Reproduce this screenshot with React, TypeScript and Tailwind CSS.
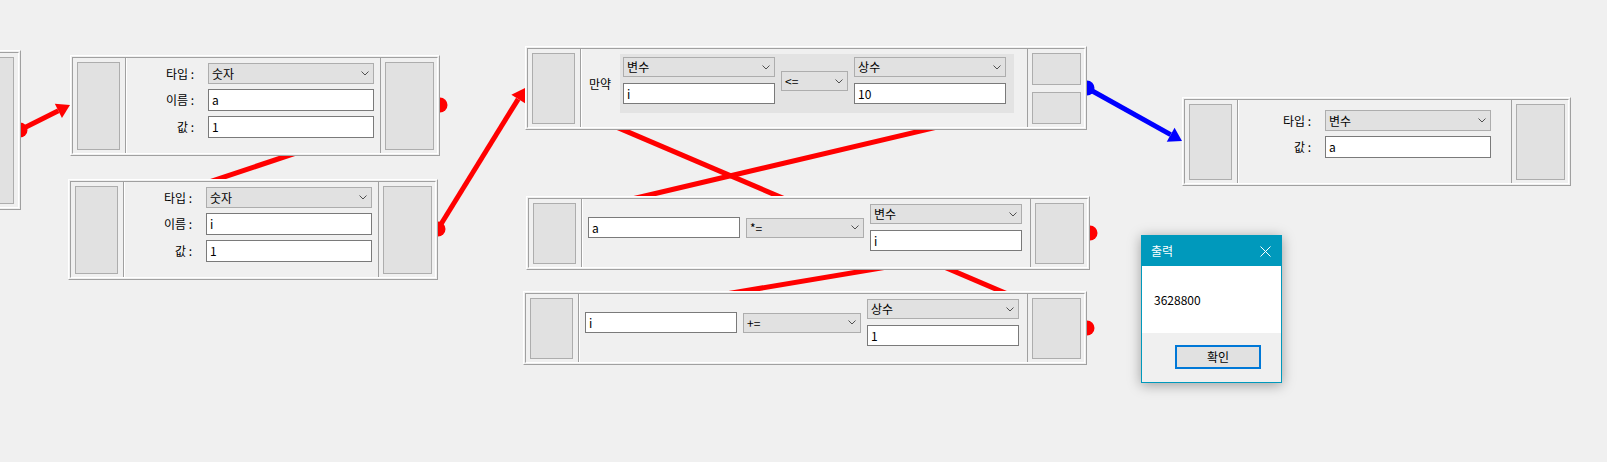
import type { ReactNode } from "react"

const RED = "#ff0000"
const BLUE = "#0000ff"

type Link = { from: [number, number]; to: [number, number]; color: string; dot?: boolean }

// wires between node ports, canvas coordinates
const links: Link[] = [
  { from: [20, 130], to: [70, 105], color: RED, dot: true },
  { from: [440, 105], to: [68, 229], color: RED, dot: true },
  { from: [438, 229], to: [525, 88], color: RED, dot: true },
  { from: [1086, 92], to: [526, 224], color: RED },
  { from: [1090, 233], to: [523, 328], color: RED, dot: true },
  { from: [1087, 328], to: [525, 88], color: RED, dot: true },
  { from: [1087, 88], to: [1182, 141], color: BLUE, dot: true },
]

function Wire({ from, to, color, dot }: Link) {
  const [x1, y1] = from
  const [x2, y2] = to
  const len = Math.hypot(x2 - x1, y2 - y1)
  const ux = (x2 - x1) / len
  const uy = (y2 - y1) / len
  const bx = x2 - ux * 13
  const by = y2 - uy * 13
  return (
    <g>
      {dot && <circle cx={x1} cy={y1} r={7.5} fill={color} />}
      <line x1={x1} y1={y1} x2={bx} y2={by} stroke={color} strokeWidth={5} />
      <polygon
        points={`${x2},${y2} ${bx - uy * 8},${by + ux * 8} ${bx + uy * 8},${by - ux * 8}`}
        fill={color}
      />
    </g>
  )
}

function Frame({ className, children }: { className: string; children?: ReactNode }) {
  return (
    <div
      className={`absolute border border-t-white border-l-white border-r-[#a0a0a0] border-b-[#a0a0a0] bg-[#f0f0f0] p-px ${className}`}
    >
      <div className="flex h-full border border-t-[#a0a0a0] border-l-[#a0a0a0] border-r-white border-b-white">
        {children}
      </div>
    </div>
  )
}

function Slot({ className = "" }: { className?: string }) {
  return <div className={`flex-1 border border-[#adadad] bg-[#e1e1e1] ${className}`} />
}

function InPort() {
  return (
    <div className="flex w-[53px] shrink-0 border-r border-[#a0a0a0] pt-[4px] pr-[5px] pb-[3px] pl-[4px]">
      <Slot />
    </div>
  )
}

function OutPort({ split }: { split?: boolean }) {
  return (
    <div className="flex w-[57px] shrink-0 flex-col gap-[7px] border-l border-[#a0a0a0] pt-[4px] pr-[3px] pb-[3px] pl-[4px]">
      <Slot />
      {split && <Slot />}
    </div>
  )
}

function Chevron() {
  return (
    <svg width="8" height="5" viewBox="0 0 8 5" className="shrink-0">
      <path d="M0.5 0.5 L4 4 L7.5 0.5" fill="none" stroke="#505050" strokeWidth="1" />
    </svg>
  )
}

function Combo({ text, className }: { text: string; className: string }) {
  return (
    <div
      className={`flex shrink-0 items-center justify-between border border-[#adadad] bg-[#e1e1e1] pl-[3px] pr-[4px] text-[12px] leading-none ${className}`}
    >
      <span>{text}</span>
      <Chevron />
    </div>
  )
}

function Field({ text, className }: { text: string; className: string }) {
  return (
    <div
      className={`flex shrink-0 items-center border border-[#7a7a7a] bg-white pl-[3px] text-[12px] leading-none ${className}`}
    >
      {text}
    </div>
  )
}

function Label({ text }: { text: string }) {
  return <div className="flex items-center justify-end text-[12px] leading-none">{text}</div>
}

function VarNode({ pos, type, name, value }: { pos: string; type: string; name: string; value: string }) {
  return (
    <Frame className={`h-[101px] w-[370px] ${pos}`}>
      <InPort />
      <div className="flex-1 border-l border-white pt-[5px]">
        <div className="grid grid-cols-[67px_166px] gap-x-[14px] gap-y-[5px]">
          <Label text="타입 :" />
          <Combo text={type} className="h-[21px] w-[166px]" />
          <Label text="이름 :" />
          <Field text={name} className="h-[22px] w-[166px]" />
          <Label text="값 :" />
          <Field text={value} className="h-[22px] w-[166px]" />
        </div>
      </div>
      <OutPort />
    </Frame>
  )
}

function AssignNode({ pos, target, op, kind, value }: { pos: string; target: string; op: string; kind: string; value: string }) {
  return (
    <Frame className={`h-[74px] w-[564px] ${pos}`}>
      <InPort />
      <div className="flex flex-1 items-start border-l border-white pt-[5px] pl-[5px]">
        <div className="flex items-center gap-[6px]">
          <Field text={target} className="h-[21px] w-[152px]" />
          <Combo text={op} className="h-[20px] w-[118px]" />
          <div className="flex flex-col gap-[6px]">
            <Combo text={kind} className="h-[20px] w-[152px]" />
            <Field text={value} className="h-[21px] w-[152px]" />
          </div>
        </div>
      </div>
      <OutPort />
    </Frame>
  )
}

export default function App() {
  return (
    <div className="relative h-[462px] w-[1607px] overflow-hidden bg-[#f0f0f0] font-['Noto_Sans_CJK_KR',sans-serif] text-black">
      <svg className="absolute inset-0" width={1607} height={462}>
        {links.map((l, i) => (
          <Wire key={i} {...l} />
        ))}
      </svg>

      {/* start node, cut off at the left edge */}
      <Frame className="left-[-40px] top-[50px] h-[160px] w-[61px]">
        <div className="flex flex-1 pt-[4px] pr-[4px] pb-[3px]">
          <Slot />
        </div>
      </Frame>

      <VarNode pos="left-[70px] top-[55px]" type="숫자" name="a" value="1" />
      <VarNode pos="left-[68px] top-[179px]" type="숫자" name="i" value="1" />

      {/* if node */}
      <Frame className="left-[525px] top-[46px] h-[84px] w-[562px]">
        <InPort />
        <div className="flex flex-1 items-start border-l border-white pt-[5px] pl-[7px]">
          <div className="flex items-center gap-[9px]">
            <span className="text-[12px] leading-none">만약</span>
            <div className="flex h-[59px] w-[394px] items-center gap-[6px] bg-[#e3e3e3] p-[3px] pr-[8px]">
              <div className="flex flex-col gap-[6px] self-start">
                <Combo text="변수" className="h-[20px] w-[152px]" />
                <Field text="i" className="h-[21px] w-[152px]" />
              </div>
              <Combo text="<=" className="h-[20px] w-[67px] self-start mt-[14px]" />
              <div className="flex flex-col gap-[6px] self-start">
                <Combo text="상수" className="h-[20px] w-[152px]" />
                <Field text="10" className="h-[21px] w-[152px]" />
              </div>
            </div>
          </div>
        </div>
        <OutPort split />
      </Frame>

      <AssignNode pos="left-[526px] top-[196px]" target="a" op="*=" kind="변수" value="i" />
      <AssignNode pos="left-[523px] top-[291px]" target="i" op="+=" kind="상수" value="1" />

      {/* print node */}
      <Frame className="left-[1182px] top-[97px] h-[89px] w-[389px]">
        <InPort />
        <div className="flex-1 border-l border-white pt-[10px]">
          <div className="grid grid-cols-[72px_166px] gap-x-[14px] gap-y-[5px]">
            <Label text="타입 :" />
            <Combo text="변수" className="h-[21px] w-[166px]" />
            <Label text="값 :" />
            <Field text="a" className="h-[22px] w-[166px]" />
          </div>
        </div>
        <OutPort />
      </Frame>

      {/* message box */}
      <div className="absolute left-[1141px] top-[235px] flex h-[148px] w-[141px] flex-col border border-[#0099bc] bg-[#f0f0f0] shadow-[0_2px_12px_rgba(0,0,0,0.35)]">
        <div className="flex h-[30px] items-center justify-between bg-[#0099bc] pl-[9px] pr-[10px] text-[12px] text-white">
          <span>출력</span>
          <svg width="11" height="11" viewBox="0 0 11 11">
            <path d="M0.5 0.5 L10.5 10.5 M10.5 0.5 L0.5 10.5" stroke="white" strokeWidth="1" />
          </svg>
        </div>
        <div className="flex h-[67px] items-center bg-white pl-[12px] text-[12px]">3628800</div>
        <div className="flex-1 pt-[12px] pl-[33px]">
          <button className="flex h-[24px] w-[86px] items-center justify-center border-2 border-[#0078d7] bg-[#e1e1e1] text-[12px] leading-none">
            확인
          </button>
        </div>
      </div>
    </div>
  )
}
